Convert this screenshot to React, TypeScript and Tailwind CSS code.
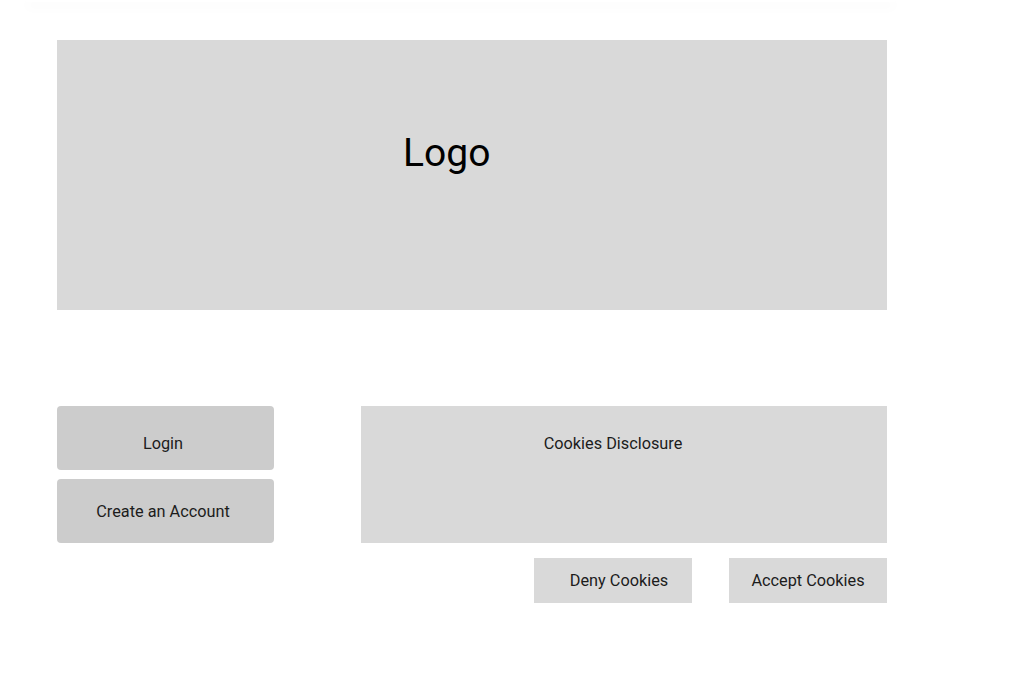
const App = () => {
  return (
    <div className="min-h-[674px] w-full bg-white font-['Roboto',sans-serif] text-[#1c1c1c]">
      {/* Header strip with soft shadow */}
      <div className="ml-[26px] h-[2px] w-[869px] bg-white shadow-[0_4px_12px_rgba(0,0,0,0.07)]" />

      <div className="ml-[57px] w-[830px]">
        {/* Logo */}
        <div className="mt-[38px] h-[270px] bg-[#d9d9d9] pl-[346px] pt-[94px]">
          <span className="text-[39px] leading-none text-black">Logo</span>
        </div>

        <div className="mt-[96px] flex items-start">
          {/* Auth buttons */}
          <div className="flex w-[217px] flex-col gap-[9px]">
            <button className="flex h-[64px] items-center justify-center rounded-[4px] bg-[#cccccc] pr-[5px] pt-[12px] text-[16.3px]">
              Login
            </button>
            <button className="flex h-[64px] items-center justify-center rounded-[4px] bg-[#cccccc] pr-[5px] pt-[2px] text-[16.3px]">
              Create an Account
            </button>
          </div>

          {/* Cookies */}
          <div className="ml-auto flex w-[526px] flex-col">
            <div className="h-[137px] bg-[#d9d9d9] pr-[22px] pt-[26px] text-center text-[16.3px] leading-6">
              Cookies Disclosure
            </div>
            <div className="mt-[15px] flex justify-end gap-[37px]">
              <button className="flex h-[45px] w-[158px] items-center justify-center bg-[#d9d9d9] pl-[12px] pt-[2px] text-[16.3px]">
                Deny Cookies
              </button>
              <button className="flex h-[45px] w-[158px] items-center justify-center bg-[#d9d9d9] pt-[2px] text-[16.3px]">
                Accept Cookies
              </button>
            </div>
          </div>
        </div>
      </div>
    </div>
  );
};

export default App;
